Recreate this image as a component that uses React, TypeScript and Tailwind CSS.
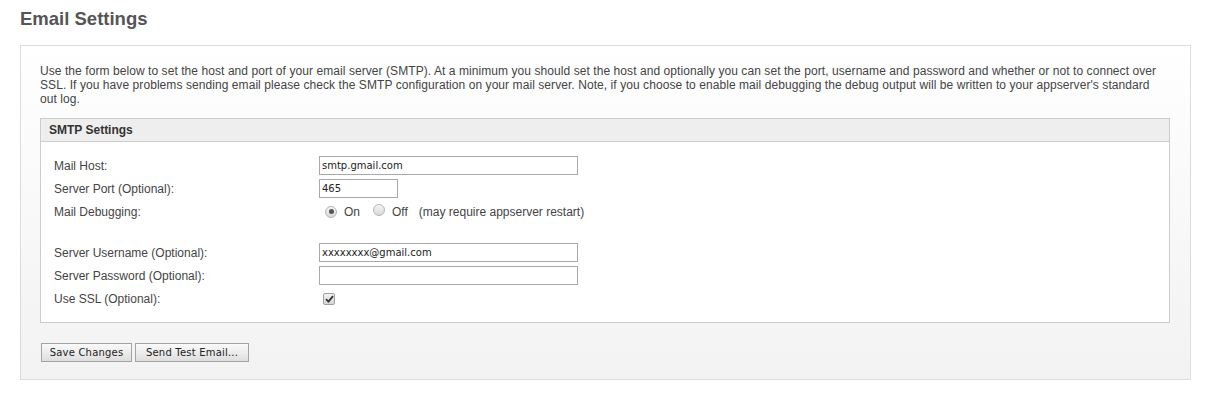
import React from "react";

const labelCol = "w-[265px] shrink-0";
const inputBase =
  "h-[19px] border border-[#a9a9a9] bg-white px-[2px] text-[10px] text-[#222] font-['DejaVu_Sans',sans-serif] outline-none";

function Radio({ checked }: { checked?: boolean }) {
  return (
    <span className="inline-flex h-[12px] w-[12px] items-center justify-center rounded-full border border-[#b5b5b5] bg-gradient-to-b from-[#f4f4f4] to-[#d9d9d9]">
      {checked && <span className="h-[5px] w-[5px] rounded-full bg-[#555]" />}
    </span>
  );
}

function CheckBox() {
  return (
    <span className="inline-flex h-[12px] w-[12px] items-center justify-center rounded-[2px] border border-[#a0a0a0] bg-gradient-to-b from-[#f2f2f2] to-[#d6d6d6]">
      <svg width="9" height="8" viewBox="0 0 9 8">
        <path d="M1 4.2 L3.4 6.6 L8 1.2" fill="none" stroke="#333" strokeWidth="1.8" />
      </svg>
    </span>
  );
}

function Row({ label, children }: { label: string; children: React.ReactNode }) {
  return (
    <div className="flex h-[23px] items-center">
      <div className={labelCol}>{label}</div>
      <div className="flex items-center">{children}</div>
    </div>
  );
}

function Button({ width, children }: { width: string; children: React.ReactNode }) {
  return (
    <button
      className={`${width} h-[19px] border border-[#a3a3a3] bg-gradient-to-b from-[#fafafa] to-[#dedede] text-center text-[10px] leading-none tracking-[0.2px] text-[#222] font-['DejaVu_Sans',sans-serif]`}
    >
      {children}
    </button>
  );
}

export default function App() {
  return (
    <div className="min-h-[408px] bg-white px-[20px] pt-[8px] font-['Liberation_Sans',Arial,sans-serif] text-[12px] text-[#444]">
      <h1 className="h-[36px] text-[18.5px] font-bold leading-[22px] text-[#555]">Email Settings</h1>

      <div className="mt-[1px] w-[1171px] border border-[#dcdcdc] bg-gradient-to-b from-white to-[#f2f2f2] pl-[19px] pr-[20px] pt-[18px] pb-[17px]">
        <p className="mr-[10px] leading-[14px] tracking-[0.07px]">
          Use the form below to set the host and port of your email server (SMTP). At a minimum you should set the
          host and optionally you can set the port, username and password and whether or not to connect over SSL.
          If you have problems sending email please check the SMTP configuration on your mail server. Note, if you
          choose to enable mail debugging the debug output will be written to your appserver's standard out log.
        </p>

        <div className="mt-[12px] border border-[#cccccc] bg-white">
          <div className="flex h-[23px] items-center border-b border-[#cccccc] bg-[#eeeeee] pl-[8px] font-bold text-[#333]">
            SMTP Settings
          </div>
          <div className="pl-[13px] pt-[12px] pb-[12px]">
            <Row label="Mail Host:">
              <input className={`${inputBase} w-[259px]`} defaultValue="smtp.gmail.com" />
            </Row>
            <Row label="Server Port (Optional):">
              <input className={`${inputBase} w-[79px]`} defaultValue="465" />
            </Row>
            <Row label="Mail Debugging:">
              <div className="flex items-center pl-[6px]">
                <Radio checked />
                <span className="ml-[7px]">On</span>
                <span className="ml-[13px]">
                  <Radio />
                </span>
                <span className="ml-[7px]">Off</span>
                <span className="ml-[11px]">(may require appserver restart)</span>
              </div>
            </Row>
            <div className="h-[18px]" />
            <Row label="Server Username (Optional):">
              <input className={`${inputBase} w-[259px]`} defaultValue="xxxxxxxx@gmail.com" />
            </Row>
            <Row label="Server Password (Optional):">
              <input className={`${inputBase} w-[259px]`} type="password" defaultValue="" />
            </Row>
            <Row label="Use SSL (Optional):">
              <span className="pl-[4px]">
                <CheckBox />
              </span>
            </Row>
          </div>
        </div>

        <div className="mt-[20px] flex gap-[3px] pl-[1px]">
          <Button width="w-[91px]">Save Changes</Button>
          <Button width="w-[114px]">Send Test Email...</Button>
        </div>
      </div>
    </div>
  );
}
